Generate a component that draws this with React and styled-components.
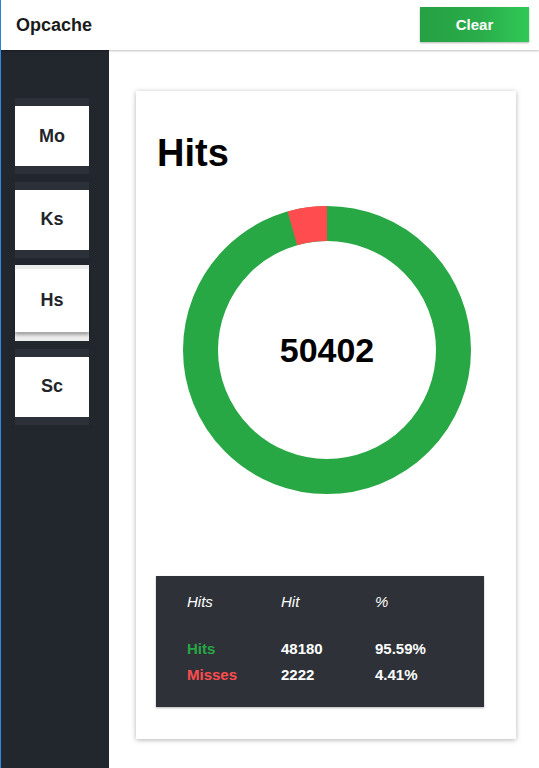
import styled, { createGlobalStyle } from 'styled-components'

const GlobalStyle = createGlobalStyle`
  html, body {
    margin: 0;
    padding: 0;
    background: #ffffff;
    font-family: "Liberation Sans", Arial, sans-serif;
  }
`

const tabs = [
  { id: 'mo', label: 'Mo' },
  { id: 'ks', label: 'Ks' },
  { id: 'hs', label: 'Hs', active: true },
  { id: 'sc', label: 'Sc' },
]

const stats = [
  { name: 'Hits', hit: 48180, pct: '95.59%', color: '#28a745' },
  { name: 'Misses', hit: 2222, pct: '4.41%', color: '#ff4c4f' },
]

function Donut({ hits, misses }) {
  const total = hits + misses
  const r = 126.5
  const c = 2 * Math.PI * r
  const missLen = (misses / total) * c

  return (
    <ChartWrap>
      <svg width="288" height="288" viewBox="0 0 288 288">
        <circle cx="144" cy="144" r={r} fill="none" stroke="#28a745" strokeWidth="35" />
        <circle
          cx="144"
          cy="144"
          r={r}
          fill="none"
          stroke="#ff4c4f"
          strokeWidth="35"
          strokeDasharray={`${missLen} ${c}`}
          transform={`rotate(${-90 - (misses / total) * 360} 144 144)`}
        />
      </svg>
      <Total>{total}</Total>
    </ChartWrap>
  )
}

export default function App() {
  return (
    <Page>
      <GlobalStyle />
      <Header>
        <Brand>Opcache</Brand>
        <ClearButton>Clear</ClearButton>
      </Header>
      <Body>
        <Sidebar>
          {tabs.map((t) => (
            <Tab key={t.id} active={t.active}>
              <TabFace active={t.active}>{t.label}</TabFace>
            </Tab>
          ))}
        </Sidebar>
        <Main>
          <Card>
            <Title>Hits</Title>
            <Donut hits={48180} misses={2222} />
            <StatsTable>
              <HeadCell>Hits</HeadCell>
              <HeadCell>Hit</HeadCell>
              <HeadCell>%</HeadCell>
              <Spacer />
              {stats.map((s) => (
                <Row key={s.name}>
                  <Cell color={s.color}>{s.name}</Cell>
                  <Cell>{s.hit}</Cell>
                  <Cell>{s.pct}</Cell>
                </Row>
              ))}
            </StatsTable>
          </Card>
        </Main>
      </Body>
    </Page>
  )
}

const Page = styled.div`
  min-height: 768px;
  display: flex;
  flex-direction: column;
  border-left: 1px solid #2f8ae6;
`

const Header = styled.div`
  height: 50px;
  display: flex;
  align-items: center;
  justify-content: space-between;
  padding: 0 10px 0 15px;
  background: #fff;
  box-shadow: 0 1px 2px rgba(0, 0, 0, 0.25);
  position: relative;
  z-index: 1;
`

const Brand = styled.div`
  font-size: 18px;
  font-weight: 700;
  color: #1a1a1a;
`

const ClearButton = styled.div`
  width: 109px;
  height: 35px;
  margin-top: -1px;
  display: flex;
  align-items: center;
  justify-content: center;
  font-size: 15px;
  font-weight: 700;
  color: #fff;
  background: linear-gradient(90deg, #26a043 0%, #2aad4a 55%, #30c957 100%);
  box-shadow: 0 1px 2px rgba(0, 0, 0, 0.3);
  cursor: pointer;
`

const Body = styled.div`
  flex: 1;
  display: flex;
`

const Sidebar = styled.div`
  width: 94px;
  padding: 48px 0 0 14px;
  background: #22262d;
  display: flex;
  flex-direction: column;
  gap: 7.5px;
`

const Tab = styled.div`
  width: 74px;
  height: 76px;
  padding: ${(p) => (p.active ? '4px 0 9px' : '8px 0')};
  box-sizing: border-box;
  background: ${(p) => (p.active ? '#ececec' : '#2c3038')};
`

const TabFace = styled.div`
  height: 100%;
  display: flex;
  align-items: center;
  justify-content: center;
  background: #fff;
  font-size: 18px;
  font-weight: 700;
  color: #22252a;
  box-shadow: ${(p) => (p.active ? '0 3px 3px rgba(0, 0, 0, 0.3)' : 'none')};
`

const Main = styled.div`
  flex: 1;
  padding: 41px 23px 28px 27px;
`

const Card = styled.div`
  height: 648px;
  box-sizing: border-box;
  padding: 43px 32px 0 20px;
  background: #fff;
  box-shadow: 0 1px 5px rgba(0, 0, 0, 0.3);
  display: flex;
  flex-direction: column;
`

const Title = styled.h1`
  margin: 0 0 0 1px;
  font-size: 38px;
  line-height: 38px;
  font-weight: 700;
  color: #000;
`

const ChartWrap = styled.div`
  position: relative;
  width: 288px;
  height: 288px;
  margin: 34px 0 0 27px;

  svg {
    display: block;
  }
`

const Total = styled.div`
  position: absolute;
  inset: 0;
  display: flex;
  align-items: center;
  justify-content: center;
  font-size: 34px;
  font-weight: 700;
  color: #000;
`

const StatsTable = styled.div`
  margin-top: 82px;
  width: 328px;
  box-sizing: border-box;
  padding: 17px 0 23px 31px;
  background: #2e3238;
  box-shadow: 0 1px 2px rgba(0, 0, 0, 0.3);
  display: grid;
  grid-template-columns: 94px 94px 1fr;
  row-gap: 8px;
`

const HeadCell = styled.div`
  font-size: 15px;
  line-height: 18px;
  font-style: italic;
  color: #fff;
`

const Spacer = styled.div`
  grid-column: 1 / -1;
  height: 13px;
`

const Row = styled.div`
  display: contents;
`

const Cell = styled.div`
  font-size: 15px;
  line-height: 18px;
  font-weight: 700;
  color: ${(p) => p.color || '#fff'};
`
